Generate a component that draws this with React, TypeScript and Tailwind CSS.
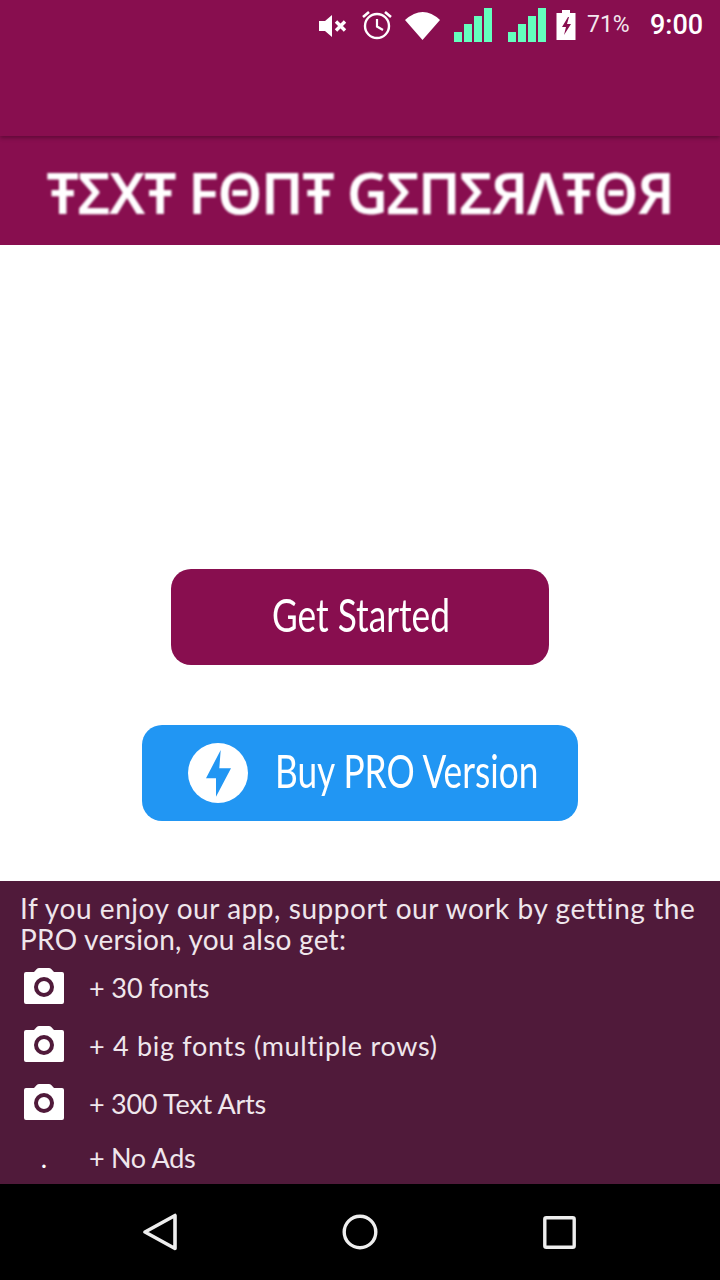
import React from "react";

function Camera() {
  return (
    <svg width="40" height="36" viewBox="0 0 40 36" className="block mb-1">
      <path d="M2 4h8l3-3.200Q14 0 15 0h10q1 0 2 .8L30 4h8q2 0 2 2v28q0 2-2 2H2q-2 0-2-2V6q0-2 2-2Z" fill="#fff" />
      <circle cx="20" cy="19" r="8" fill="#fff" stroke="#501a3a" strokeWidth="4" />
    </svg>
  );
}

function Signal() {
  return (
    <svg width="38" height="34" viewBox="0 0 38 34" className="block">
      <rect x="0" y="24" width="8" height="10" fill="#64ffbe" />
      <rect x="10" y="16" width="8" height="18" fill="#64ffbe" />
      <rect x="20" y="8" width="8" height="26" fill="#64ffbe" />
      <rect x="30" y="0" width="8" height="34" fill="#64ffbe" />
    </svg>
  );
}

function Row({ icon, text, h, track }: { icon: React.ReactNode; text: string; h: string; track: string }) {
  return (
    <div className={`flex items-center ${h}`}>
      <div className="w-[69px] pl-1 flex justify-start">{icon}</div>
      <span className={`text-[27px] text-[#efe6ec] ${track}`}>{text}</span>
    </div>
  );
}

export default function App() {
  return (
    <div className="w-[720px] h-[1280px] flex flex-col bg-white overflow-hidden font-['Lato','Liberation_Sans',sans-serif]">
      <header className="h-[136px] bg-[#880e4f] relative z-10 shadow-[0_2px_4px_rgba(0,0,0,0.3)]">
        <div className="flex items-center h-[50px] pl-[319px] font-['Roboto',sans-serif] text-white">
          <svg width="28" height="22" viewBox="0 0 28 22" className="block mr-[15px] mt-[1px]">
            <path d="M0 6h6l7-6v22l-7-6H0Z" fill="#fff" />
            <path d="M17 6.500l9 9M26 6.500l-9 9" stroke="#fff" strokeWidth="3.400" />
          </svg>
          <svg width="30" height="30" viewBox="0 0 30 30" className="block mr-[13px]">
            <circle cx="15" cy="16" r="12" fill="none" stroke="#fff" strokeWidth="2.400" />
            <path d="M15 9v7.500l6 3.500" fill="none" stroke="#fff" strokeWidth="2.200" />
            <path d="M1 7l6-5M29 7l-6-5" stroke="#fff" strokeWidth="2.600" />
          </svg>
          <svg width="36" height="29" viewBox="0 0 36 29" className="block mr-[13px]">
            <path d="M0 9Q18-7 35 9L17.500 29Z" fill="#fff" />
          </svg>
          <div className="mr-[16px]"><Signal /></div>
          <div className="mr-[10px]"><Signal /></div>
          <svg width="20" height="30" viewBox="0 0 20 30" className="block mr-[11px]">
            <path d="M6 0h8v3h5.500v27H.5V3H6Z" fill="#fff" />
            <path d="M12 7 6 17h4l-2 8 7-11h-4l2-7Z" fill="#880e4f" />
          </svg>
          <span className="text-[23px] w-[63px] text-[#f3e7ee]">71%</span>
          <span className="text-[27px] font-medium">9:00</span>
        </div>
      </header>

      <div className="h-[109px] bg-[#880e4f] flex items-center justify-center pt-[4px]">
        <span className="text-white text-[57px] leading-none font-semibold tracking-[-1.4px] font-['Noto_Sans',sans-serif] blur-[0.8px] whitespace-nowrap">
          ŦΣXŦ FΘΠŦ GΣΠΣЯΛŦΘЯ
        </span>
      </div>

      <main className="flex-1 flex flex-col items-center justify-end gap-[60px] pb-[60px]">
        <button className="w-[378px] h-[96px] rounded-[20px] bg-[#880e4f] text-white flex items-center justify-center">
          <span className="block w-[177px] mb-[6px] text-[47px] whitespace-nowrap origin-left scale-x-[0.75]">Get Started</span>
        </button>
        <button className="w-[436px] h-[96px] rounded-[20px] bg-[#2196f3] text-white flex items-center pl-[46px] gap-[27px]">
          <svg width="60" height="60" viewBox="0 0 60 60" className="block shrink-0">
            <circle cx="30" cy="30" r="30" fill="#fff" />
            <path d="M32.700 7 18 35.300h10v18.400L43 25.300H31.300Z" fill="#2196f3" />
          </svg>
          <span className="block w-[263px] mb-[6px] text-[47px] whitespace-nowrap text-left origin-left scale-x-[0.75]">Buy PRO Version</span>
        </button>
      </main>

      <section className="h-[303px] bg-[#501a3a] pl-5 pt-[12px]">
        <p className="text-[28px] leading-[31px] text-[#efe6ec] whitespace-nowrap">
          <span className="tracking-[0.56px]">If you enjoy our app, support our work by getting the</span>
          <br />
          <span className="tracking-[0.25px]">PRO version, you also get:</span>
        </p>
        <div className="mt-[4px]">
          <Row h="h-[58px]" track="tracking-[-0.1px]" icon={<Camera />} text="+ 30 fonts" />
          <Row h="h-[58px]" track="tracking-[0.7px]" icon={<Camera />} text="+ 4 big fonts (multiple rows)" />
          <Row h="h-[58px]" track="tracking-[-0.27px]" icon={<Camera />} text="+ 300 Text Arts" />
          <Row h="h-[50px]" track="tracking-[-0.3px]" icon={<span className="w-[40px] text-center text-white text-[27px]">.</span>} text="+ No Ads" />
        </div>
      </section>

      <nav className="h-[96px] bg-black flex items-center">
        <div className="w-[720px] flex items-center justify-between pl-[143px] pr-[144px]">
          <svg width="34" height="38" viewBox="0 0 34 38" className="block">
            <path d="M32 2.500v33L2 19Z" fill="none" stroke="#eee" strokeWidth="3.600" strokeLinejoin="round" />
          </svg>
          <svg width="36" height="36" viewBox="0 0 36 36" className="block">
            <circle cx="18" cy="18" r="15.800" fill="none" stroke="#eee" strokeWidth="3.400" />
          </svg>
          <svg width="33" height="33" viewBox="0 0 33 33" className="block">
            <rect x="1.800" y="1.800" width="29.400" height="29.400" rx="1.500" fill="none" stroke="#eee" strokeWidth="3.400" />
          </svg>
        </div>
      </nav>
    </div>
  );
}
